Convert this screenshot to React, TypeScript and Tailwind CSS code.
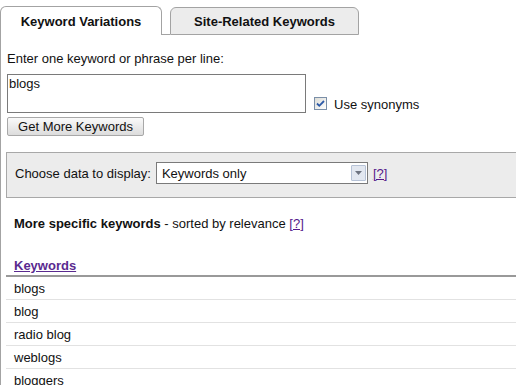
const rows = ["blogs", "blog", "radio blog", "weblogs", "bloggers"];

export default function App() {
  return (
    <div className="w-[516px] h-[385px] overflow-hidden bg-white text-[13px] leading-[15px] text-[#111] font-['Liberation_Sans',Arial,sans-serif]">
      {/* tabs */}
      <div className="flex items-end h-[35px]">
        <div className="w-[162px] h-[29px] rounded-t-[6px] border border-b-0 border-[#a3a3a3] bg-white font-bold flex items-center justify-center">
          Keyword Variations
        </div>
        <div className="w-[8px] h-px bg-[#a3a3a3]" />
        <div className="w-[189px] h-[28px] rounded-t-[6px] border border-[#a3a3a3] bg-[#ececec] font-bold flex items-center justify-center">
          Site-Related Keywords
        </div>
      </div>

      <div className="border-l border-[#a3a3a3] pl-[6px] pt-[16px]">
        <p>Enter one keyword or phrase per line:</p>

        <div className="flex items-end mt-[8px]">
          <textarea
            defaultValue="blogs"
            className="w-[299px] h-[39px] border border-[#7a7a7a] px-[1px] py-[1px] resize-none text-[13px] leading-[15px] outline-none font-['Liberation_Sans',Arial,sans-serif]"
          />
          <div className="ml-[8px] mb-[3px] w-[13px] h-[13px] border border-[#7b8fa8] bg-gradient-to-br from-[#dcdcd6] to-white flex items-center justify-center">
            <svg width="9" height="9" viewBox="0 0 9 9">
              <path d="M1 4.5 L3.3 6.8 L8 2" fill="none" stroke="#2d5aa8" strokeWidth="1.8" />
            </svg>
          </div>
          <span className="ml-[7px] mb-[1px]">Use synonyms</span>
        </div>

        <button className="mt-[4px] h-[19px] w-[137px] border border-[#a8a8a8] rounded-[2px] bg-gradient-to-b from-[#fafafa] to-[#dcdcdc] text-[13px] leading-[15px] flex items-center justify-center font-['Liberation_Sans',Arial,sans-serif]">
          Get More Keywords
        </button>

        {/* data chooser */}
        <div className="-ml-px mt-[16px] h-[46px] border-y border-l border-[#a8a8a8] bg-[#ececec] pl-[8px] pt-[9px] flex items-start">
          <div className="flex items-center">
            <span>Choose data to display:</span>
            <div className="ml-[5px] w-[212px] h-[22px] border border-[#7a7a7a] bg-white flex items-center justify-between pl-[5px] pr-[1px]">
              <span>Keywords only</span>
              <div className="w-[15px] h-[16px] border border-[#b6c2d6] bg-[#e2e7f0] rounded-[1px] flex items-center justify-center">
                <svg width="7" height="4" viewBox="0 0 7 4">
                  <path d="M0 0 H7 L3.5 4 Z" fill="#6d7380" />
                </svg>
              </div>
            </div>
            <a href="#" className="ml-[5px] text-[#551a8b] underline">[?]</a>
          </div>
        </div>

        <p className="mt-[18px] pl-[7px]">
          <span className="font-bold">More specific keywords</span> - sorted by relevance{" "}
          <a href="#" className="text-[#551a8b] underline">[?]</a>
        </p>

        {/* keyword table */}
        <div className="-ml-px mt-[27px]">
          <div className="pl-[8px] pb-[2px] border-b-2 border-[#999]">
            <a href="#" className="font-bold text-[#5a2a8f] underline">Keywords</a>
          </div>
          {rows.map((r) => (
            <div key={r} className="h-[23px] border-b border-[#e2e2e2] pl-[8px] flex items-center">
              {r}
            </div>
          ))}
        </div>
      </div>
    </div>
  );
}
